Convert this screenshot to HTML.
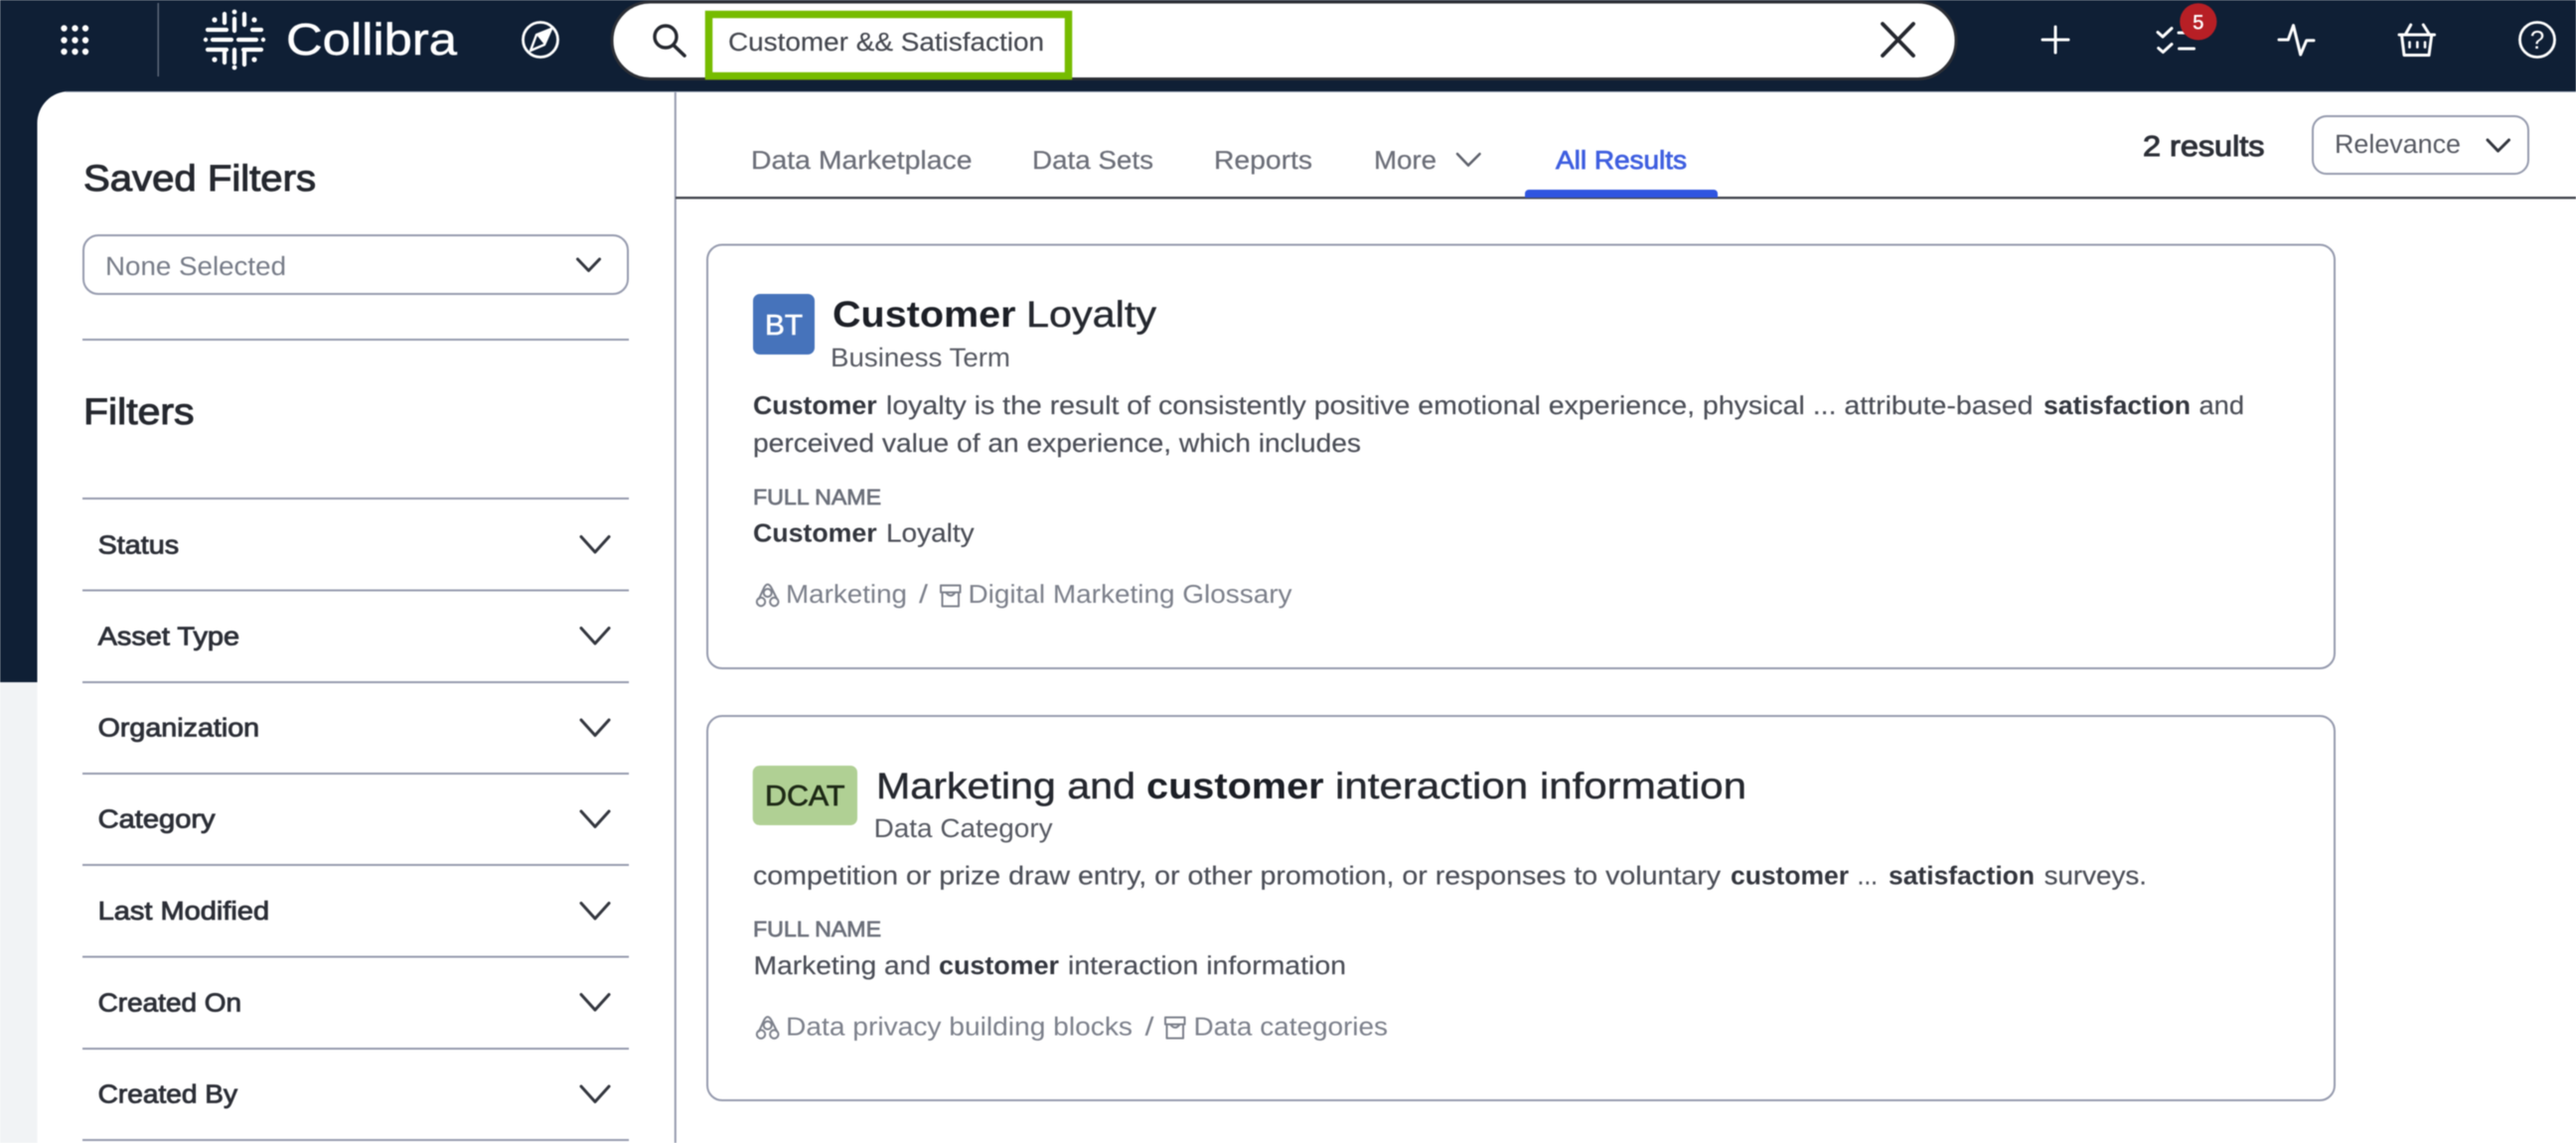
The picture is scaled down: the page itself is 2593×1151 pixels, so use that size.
<!DOCTYPE html>
<html lang="en">
<head>
<meta charset="utf-8">
<title>Collibra Search Results</title>
<style>
html,body{margin:0;padding:0;width:2593px;height:1151px;overflow:hidden;background:#fff}
svg{display:block;filter:blur(.45px)}
text{font-family:"Liberation Sans",sans-serif;text-rendering:geometricPrecision;white-space:pre}
.body{font-size:26px;fill:#4b4e57;stroke:#4b4e57;stroke-width:.15px}
.bb{font-size:26px;font-weight:700;fill:#33363e}
.lab{font-size:22px;fill:#6c707b;stroke:#6c707b;stroke-width:.7px}
.crumb{font-size:26px;fill:#7c808b}
.fl{font-size:26px;fill:#2c2f37;stroke:#2c2f37;stroke-width:.85px}
.tab{font-size:26px;fill:#6b6e78;stroke:#6b6e78;stroke-width:.2px}
.h{font-size:37px;fill:#25282f;stroke:#25282f;stroke-width:1px}
.t{font-size:37px;fill:#25282f;stroke:#25282f;stroke-width:.4px}
.tb{font-size:37px;font-weight:700;fill:#1c1f26}
.sub{font-size:26.5px;fill:#565962}
.chev{fill:none;stroke:#33363e;stroke-width:3;stroke-linecap:round;stroke-linejoin:round}
.ln{stroke:#969bae;stroke-width:2}
.ic{fill:none;stroke:#fff;stroke-width:3;stroke-linecap:round;stroke-linejoin:round}
.cr{fill:none;stroke:#7c808b;stroke-width:2;stroke-linecap:round;stroke-linejoin:round}
</style>
</head>
<body>
<svg xmlns="http://www.w3.org/2000/svg" width="2593" height="1151" viewBox="0 0 2593 1151">
<!-- backgrounds -->
<rect x="0" y="0" width="2593" height="1151" fill="#fff"/>
<rect x="0" y="0" width="2593" height="93" fill="#0f1f35"/>
<rect x="0" y="0" width="90" height="140" fill="#0f1f35"/>
<rect x="0" y="0" width="38" height="687" fill="#0f1f35"/>
<rect x="0" y="687" width="38" height="464" fill="#f1f3f5"/>
<path d="M37.5 1151V124a32 32 0 0 1 32-32H2593V1151Z" fill="#fff"/>
<rect x="66" y="92" width="2527" height="1" fill="#aab4c4"/>

<!-- apps grid -->
<g fill="#fff">
<circle cx="64.5" cy="28.5" r="3.2"/><circle cx="75.5" cy="28.5" r="3.2"/><circle cx="86" cy="28.5" r="3.2"/>
<circle cx="64.5" cy="40.5" r="3.2"/><circle cx="75.5" cy="40.5" r="3.2"/><circle cx="86" cy="40.5" r="3.2"/>
<circle cx="64.5" cy="52" r="3.2"/><circle cx="75.5" cy="52" r="3.2"/><circle cx="86" cy="52" r="3.2"/>
</g>
<rect x="158.5" y="3" width="1.5" height="74" fill="#5c6778"/>

<!-- logo mark -->
<g stroke="#fff" stroke-width="4.2" stroke-linecap="round" fill="none">
<path d="M209 30H228M254 30H263M214 40H233M240 40H258M209 50H228M245 50H263"/>
<path d="M226 14V23M236 19V31M246 14V25M226 52V63M236 50V63M246 52V65"/>
</g>
<g fill="#fff">
<circle cx="207" cy="40" r="2.2"/><circle cx="265" cy="40" r="2.2"/>
<circle cx="236" cy="12" r="2.4"/><circle cx="236" cy="68" r="2.4"/>
<circle cx="216" cy="20" r="2.6"/><circle cx="256" cy="20" r="2.6"/>
<circle cx="216" cy="60" r="2.6"/><circle cx="256" cy="60" r="2.6"/>
</g>
<text x="288" y="55" font-size="45" fill="#fff" stroke="#fff" stroke-width=".5" textLength="172" lengthAdjust="spacingAndGlyphs">Collibra</text>

<!-- compass -->
<circle cx="544" cy="40" r="17.5" fill="none" stroke="#fff" stroke-width="2.8"/>
<path d="M555 29 L548 45 L534 51 L540 35 Z" fill="none" stroke="#fff" stroke-width="2.4" stroke-linejoin="round"/>
<path d="M555 29 L540 35 L548 45 Z" fill="#fff"/>

<!-- search bar -->
<rect x="616" y="2" width="1353" height="77.5" rx="38.5" fill="#fff" stroke="#2c2f36" stroke-width="3"/>
<circle cx="670" cy="37" r="11" fill="none" stroke="#25282f" stroke-width="3.4"/>
<path d="M678 45.5L689 56" stroke="#25282f" stroke-width="3.6" stroke-linecap="round"/>
<rect x="713.5" y="14.5" width="362" height="62" fill="#fff" stroke="#76bc00" stroke-width="7.5"/>
<text x="733" y="51" font-size="26" fill="#44474f" stroke="#44474f" stroke-width=".15" textLength="318" lengthAdjust="spacingAndGlyphs">Customer &amp;&amp; Satisfaction</text>
<path d="M1895 24L1926 56M1926 24L1895 56" stroke="#25282f" stroke-width="3.8" stroke-linecap="round"/>

<!-- right nav icons -->
<path class="ic" d="M2069 27V53M2056 40H2082"/>
<g class="ic">
<path d="M2172 32.5L2177 37L2186 28.5"/>
<path d="M2172.7 48.5L2177.3 52.5L2186 44.5"/>
<path d="M2193 33H2206M2193.5 49H2208.5"/>
</g>
<circle cx="2212.8" cy="21.8" r="18.6" fill="#b71f25"/>
<text x="2212.8" y="29" font-size="20" fill="#fff" text-anchor="middle" stroke="#fff" stroke-width=".5">5</text>
<path class="ic" d="M2294 40H2303.3L2308.5 25.5L2315.7 55L2321.7 40.7H2329"/>
<g class="ic">
<path d="M2415 35H2450.5"/>
<path d="M2417.5 35L2420 55.5H2445L2447.7 35"/>
<path d="M2426.7 25L2421.7 34M2439.3 25L2445 34"/>
<path d="M2425.5 42.5V47.5M2433.3 42.5V47.5M2441 42.5V47.5" stroke-width="2.6"/>
</g>
<circle cx="2554" cy="40" r="17.5" fill="none" stroke="#fff" stroke-width="2.8"/>
<text x="2554" y="49" font-size="26" fill="#fff" text-anchor="middle">?</text>

<!-- sidebar divider & header line -->
<rect x="678.8" y="93" width="2" height="1058" fill="#969bae"/>
<rect x="680" y="198" width="1913" height="2.4" fill="#44474f"/>

<!-- saved filters -->
<text class="h" x="84" y="192" textLength="234" lengthAdjust="spacingAndGlyphs">Saved Filters</text>
<rect x="84" y="237" width="548" height="59" rx="15" fill="#fff" stroke="#969bae" stroke-width="2"/>
<text x="106" y="277" font-size="26.5" fill="#777c88" textLength="182" lengthAdjust="spacingAndGlyphs">None Selected</text>
<path class="chev" d="M581.5 261L592.5 272.5L603.5 261"/>
<line class="ln" x1="83" y1="342" x2="633" y2="342"/>
<text class="h" x="84" y="427" textLength="111.5" lengthAdjust="spacingAndGlyphs">Filters</text>

<!-- filter list -->
<line class="ln" x1="83" y1="502" x2="633" y2="502"/>
<line class="ln" x1="83" y1="594.5" x2="633" y2="594.5"/>
<line class="ln" x1="83" y1="687" x2="633" y2="687"/>
<line class="ln" x1="83" y1="779" x2="633" y2="779"/>
<line class="ln" x1="83" y1="871" x2="633" y2="871"/>
<line class="ln" x1="83" y1="963.5" x2="633" y2="963.5"/>
<line class="ln" x1="83" y1="1056" x2="633" y2="1056"/>
<line class="ln" x1="83" y1="1148" x2="633" y2="1148"/>

<text class="fl" x="98.6" y="557.5" textLength="81.5" lengthAdjust="spacingAndGlyphs">Status</text>
<text class="fl" x="98.6" y="649.5" textLength="142.5" lengthAdjust="spacingAndGlyphs">Asset Type</text>
<text class="fl" x="98.6" y="741.5" textLength="162.5" lengthAdjust="spacingAndGlyphs">Organization</text>
<text class="fl" x="98.6" y="833.5" textLength="118" lengthAdjust="spacingAndGlyphs">Category</text>
<text class="fl" x="98.6" y="926" textLength="172.5" lengthAdjust="spacingAndGlyphs">Last Modified</text>
<text class="fl" x="98.6" y="1018.5" textLength="144.5" lengthAdjust="spacingAndGlyphs">Created On</text>
<text class="fl" x="98.6" y="1110.5" textLength="140.5" lengthAdjust="spacingAndGlyphs">Created By</text>

<g class="chev">
<path d="M585 540.5L599 556L613 540.5"/>
<path d="M585 632.5L599 648L613 632.5"/>
<path d="M585 725L599 740.5L613 725"/>
<path d="M585 817L599 832.5L613 817"/>
<path d="M585 909.5L599 925L613 909.5"/>
<path d="M585 1001.5L599 1017L613 1001.5"/>
<path d="M585 1094L599 1109.5L613 1094"/>
</g>

<!-- tabs -->
<text class="tab" x="756" y="170" textLength="222.5" lengthAdjust="spacingAndGlyphs">Data Marketplace</text>
<text class="tab" x="1039" y="170" textLength="122" lengthAdjust="spacingAndGlyphs">Data Sets</text>
<text class="tab" x="1222" y="170" textLength="99" lengthAdjust="spacingAndGlyphs">Reports</text>
<text class="tab" x="1383" y="170" textLength="63" lengthAdjust="spacingAndGlyphs">More</text>
<path d="M1467 155L1478 166.5L1489.5 155" fill="none" stroke="#5f626c" stroke-width="2.6" stroke-linecap="round" stroke-linejoin="round"/>
<text x="1566" y="170" font-size="26" fill="#3f5fe0" stroke="#3f5fe0" stroke-width=".8" textLength="132" lengthAdjust="spacingAndGlyphs">All Results</text>
<path d="M1535 199V195a4 4 0 0 1 4-4H1725a4 4 0 0 1 4 4V199Z" fill="#2f55e0"/>

<!-- results count / sort -->
<text x="2157" y="157" font-size="29" fill="#2c2f37" stroke="#2c2f37" stroke-width="1" textLength="122.5" lengthAdjust="spacingAndGlyphs">2 results</text>
<rect x="2328" y="117" width="217" height="58" rx="14" fill="#fff" stroke="#969bae" stroke-width="2"/>
<text x="2350" y="154" font-size="26.5" fill="#565962" textLength="127" lengthAdjust="spacingAndGlyphs">Relevance</text>
<path class="chev" d="M2504 141L2514.5 152L2525.5 141" stroke-width="2.8"/>

<!-- card 1 -->
<rect x="712" y="246.5" width="1638" height="426.5" rx="15" fill="#fff" stroke="#969bae" stroke-width="2"/>
<rect x="758" y="296" width="62" height="61" rx="7" fill="#4673bb"/>
<text x="770" y="337" font-size="29" fill="#fff" stroke="#fff" stroke-width=".6" textLength="38" lengthAdjust="spacingAndGlyphs">BT</text>
<text class="tb" x="838" y="329" textLength="184.5" lengthAdjust="spacingAndGlyphs">Customer</text>
<text class="t" x="1033" y="329" textLength="131" lengthAdjust="spacingAndGlyphs">Loyalty</text>
<text class="sub" x="836" y="369" textLength="181" lengthAdjust="spacingAndGlyphs">Business Term</text>

<text class="bb" x="758" y="417" textLength="124.6" lengthAdjust="spacingAndGlyphs">Customer</text>
<text class="body" x="892" y="417" textLength="1154.5" lengthAdjust="spacingAndGlyphs">loyalty is the result of consistently positive emotional experience, physical ... attribute-based</text>
<text class="bb" x="2057" y="417" textLength="148" lengthAdjust="spacingAndGlyphs">satisfaction</text>
<text class="body" x="2213.5" y="417" textLength="45.5" lengthAdjust="spacingAndGlyphs">and</text>
<text class="body" x="758" y="455" textLength="612" lengthAdjust="spacingAndGlyphs">perceived value of an experience, which includes</text>

<text class="lab" x="758" y="508" textLength="129" lengthAdjust="spacingAndGlyphs">FULL NAME</text>
<text class="bb" x="758" y="545.5" textLength="124.6" lengthAdjust="spacingAndGlyphs">Customer</text>
<text class="body" x="892" y="545.5" textLength="88.6" lengthAdjust="spacingAndGlyphs">Loyalty</text>

<g class="cr">
<path d="M769 592Q772.7 585 776.5 592L782 603M764 603L769 592"/>
<circle cx="772.7" cy="597" r="4"/><circle cx="766" cy="606" r="4.2"/><circle cx="779.3" cy="606" r="4.2"/>
</g>
<text class="crumb" x="791" y="607" textLength="122" lengthAdjust="spacingAndGlyphs">Marketing</text>
<text class="crumb" x="925" y="607" textLength="9" lengthAdjust="spacingAndGlyphs">/</text>
<g class="cr">
<path d="M947 589.5H966.5V596.5H947Z"/><path d="M948.5 596.5V610.5H965V596.5"/><path d="M952 596.5Q957 603 961.5 596.5"/>
</g>
<text class="crumb" x="974.5" y="607" textLength="326" lengthAdjust="spacingAndGlyphs">Digital Marketing Glossary</text>

<!-- card 2 -->
<rect x="712" y="721" width="1638" height="387" rx="15" fill="#fff" stroke="#969bae" stroke-width="2"/>
<rect x="757.7" y="771" width="105.3" height="60" rx="7" fill="#b0d094"/>
<text x="770" y="811" font-size="29" fill="#1e2a16" stroke="#1e2a16" stroke-width=".7" textLength="80.5" lengthAdjust="spacingAndGlyphs">DCAT</text>
<text class="t" x="882" y="804" textLength="261" lengthAdjust="spacingAndGlyphs">Marketing and</text>
<text class="tb" x="1154" y="804" textLength="178.6" lengthAdjust="spacingAndGlyphs">customer</text>
<text class="t" x="1344" y="804" textLength="414" lengthAdjust="spacingAndGlyphs">interaction information</text>
<text class="sub" x="879.6" y="843" textLength="180" lengthAdjust="spacingAndGlyphs">Data Category</text>

<text class="body" x="758" y="890.5" textLength="974" lengthAdjust="spacingAndGlyphs">competition or prize draw entry, or other promotion, or responses to voluntary</text>
<text class="bb" x="1742" y="890.5" textLength="119" lengthAdjust="spacingAndGlyphs">customer</text>
<text class="body" x="1869.5" y="890.5" textLength="20.5" lengthAdjust="spacingAndGlyphs">...</text>
<text class="bb" x="1901" y="890.5" textLength="147" lengthAdjust="spacingAndGlyphs">satisfaction</text>
<text class="body" x="2057.6" y="890.5" textLength="103.4" lengthAdjust="spacingAndGlyphs">surveys.</text>

<text class="lab" x="758" y="943" textLength="129" lengthAdjust="spacingAndGlyphs">FULL NAME</text>
<text class="body" x="758.7" y="981" textLength="178.3" lengthAdjust="spacingAndGlyphs">Marketing and</text>
<text class="bb" x="945" y="981" textLength="121" lengthAdjust="spacingAndGlyphs">customer</text>
<text class="body" x="1075" y="981" textLength="280" lengthAdjust="spacingAndGlyphs">interaction information</text>

<g class="cr">
<path d="M769 1027.5Q772.7 1020.5 776.5 1027.5L782 1038.5M764 1038.5L769 1027.5"/>
<circle cx="772.7" cy="1032.5" r="4"/><circle cx="766" cy="1041.5" r="4.2"/><circle cx="779.3" cy="1041.5" r="4.2"/>
</g>
<text class="crumb" x="791" y="1042.5" textLength="349" lengthAdjust="spacingAndGlyphs">Data privacy building blocks</text>
<text class="crumb" x="1152.5" y="1042.5" textLength="9" lengthAdjust="spacingAndGlyphs">/</text>
<g class="cr">
<path d="M1173 1024.5H1192.5V1031.5H1173Z"/><path d="M1174.5 1031.5V1045.5H1191V1031.5"/><path d="M1178 1031.5Q1183 1038 1187.5 1031.5"/>
</g>
<text class="crumb" x="1201.5" y="1042.5" textLength="195.5" lengthAdjust="spacingAndGlyphs">Data categories</text>
</svg>
</body>
</html>
